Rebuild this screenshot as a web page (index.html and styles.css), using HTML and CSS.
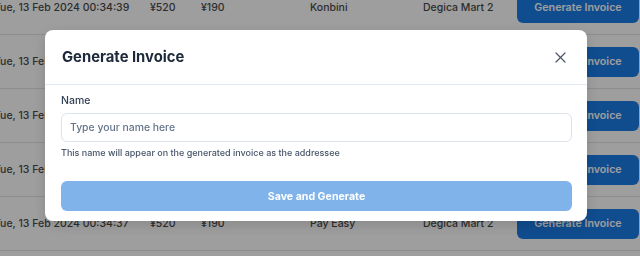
FILE: index.html
```html
<!DOCTYPE html>
<html lang="en">
<head>
  <meta charset="UTF-8" />
  <meta name="viewport" content="width=device-width, initial-scale=1.0"/>
  <title>Transactions – Generate Invoice</title>
  <link rel="stylesheet" href="styles.css">
</head>
<body>
  <main class="lista">
    <div class="linha">
      <span class="data">Tue, 13 Feb 2024 00:34:39</span>
      <span>¥520</span>
      <span>¥190</span>
      <span>Konbini</span>
      <span>Degica Mart 2</span>
      <button class="btn-invoice">Generate Invoice</button>
    </div>
    <div class="linha">
      <span class="data">Tue, 13 Feb 2024 00:34:39</span>
      <span>¥520</span>
      <span>¥190</span>
      <span>Konbini</span>
      <span>Degica Mart 2</span>
      <button class="btn-invoice">Generate Invoice</button>
    </div>
    <div class="linha">
      <span class="data">Tue, 13 Feb 2024 00:34:38</span>
      <span>¥520</span>
      <span>¥190</span>
      <span>Konbini</span>
      <span>Degica Mart 2</span>
      <button class="btn-invoice">Generate Invoice</button>
    </div>
    <div class="linha">
      <span class="data">Tue, 13 Feb 2024 00:34:38</span>
      <span>¥520</span>
      <span>¥190</span>
      <span>Pay Easy</span>
      <span>Degica Mart 2</span>
      <button class="btn-invoice">Generate Invoice</button>
    </div>
    <div class="linha">
      <span class="data">Tue, 13 Feb 2024 00:34:37</span>
      <span>¥520</span>
      <span>¥190</span>
      <span>Pay Easy</span>
      <span>Degica Mart 2</span>
      <button class="btn-invoice">Generate Invoice</button>
    </div>
  </main>

  <div class="overlay">
    <div class="modal">
      <div class="modal-header">
        <h2>Generate Invoice</h2>
        <button class="fechar" aria-label="Close">
          <svg width="11" height="11" viewBox="0 0 11 11"><path d="M1 1l9 9M10 1l-9 9" stroke="#4b5563" stroke-width="1.2" stroke-linecap="round"/></svg>
        </button>
      </div>
      <div class="modal-body">
        <label for="nome">Name</label>
        <input type="text" id="nome" placeholder="Type your name here" />
        <small>This name will appear on the generated invoice as the addressee</small>
        <button class="btn-salvar">Save and Generate</button>
      </div>
    </div>
  </div>
</body>
</html>
```

FILE: styles.css
```css
body {
  font-family: 'Inter', 'Noto Sans', Arial, sans-serif;
  background: #fff;
  color: #333;
  margin: 0;
  padding: 0;
  overflow: hidden;
}

.lista {
  margin-top: -19px;
  margin-left: -6px;
}

.linha {
  display: grid;
  grid-template-columns: 156px 51px 109px 113px 94px 122px;
  align-items: center;
  height: 53px;
  border-bottom: 1px solid #e4e4e4;
  font-size: 10.5px;
  font-weight: 500;
  color: #4a4a4a;
  white-space: nowrap;
}

.btn-invoice {
  background-color: #1a7ce6;
  color: #fff;
  border: none;
  height: 30px;
  border-radius: 6px;
  font-family: inherit;
  font-size: 10.7px;
  font-weight: 600;
}

.overlay {
  position: fixed;
  inset: 0;
  background: rgba(0, 0, 0, 0.38);
  padding: 30px 0 0 45px;
}

.modal {
  width: 542px;
  background: #fff;
  border-radius: 8px;
  box-shadow: 0 4px 14px rgba(0,0,0,0.15);
}

.modal-header {
  display: flex;
  align-items: center;
  justify-content: space-between;
  height: 54px;
  padding: 0 21px 0 17px;
  border-bottom: 1px solid #e2e8f0;
}

.modal-header h2 {
  margin: 0;
  font-size: 14.8px;
  font-weight: 700;
  color: #1e293b;
}

.fechar {
  background: none;
  border: none;
  padding: 0;
  width: 11px;
  height: 11px;
  display: flex;
}

.modal-body {
  display: flex;
  flex-direction: column;
  padding: 9px 15px 10px 16px;
}

.modal-body label {
  font-size: 10.5px;
  font-weight: 500;
  line-height: 13px;
  color: #334155;
  margin-bottom: 6px;
}

.modal-body input {
  height: 29px;
  box-sizing: border-box;
  border: 1px solid #dde3ea;
  border-radius: 6px;
  padding: 0 8px;
  font-family: inherit;
  font-size: 10.4px;
  font-weight: 500;
}

.modal-body input::placeholder {
  color: #64748b;
}

.modal-body small {
  font-size: 9px;
  font-weight: 500;
  line-height: 11px;
  color: #475569;
  margin-top: 5px;
}

.btn-salvar {
  margin-top: 23px;
  height: 30px;
  background-color: #7fb3ea;
  color: #fff;
  border: none;
  border-radius: 6px;
  font-family: inherit;
  font-size: 10.6px;
  font-weight: 700;
}
```
